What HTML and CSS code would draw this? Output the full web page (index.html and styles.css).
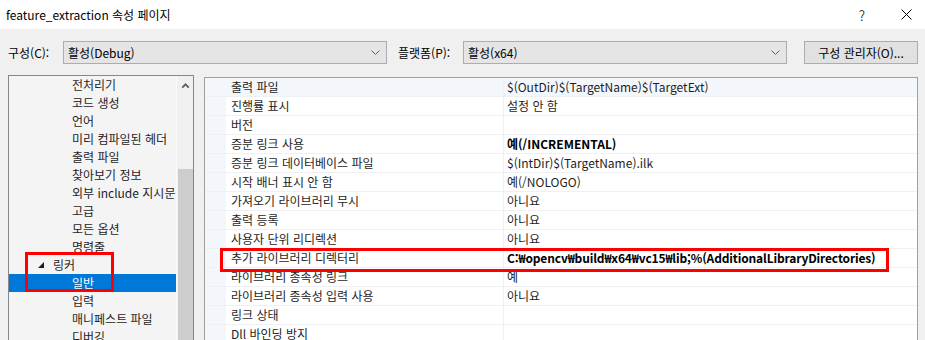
FILE: index.html
```html
<!DOCTYPE html>
<html lang="ko">
<head>
  <meta charset="UTF-8" />
  <title>feature_extraction 속성 페이지</title>
  <link rel="stylesheet" href="styles.css">
</head>
<body>
  <div class="titlebar">
    <span class="title">feature_extraction 속성 페이지</span>
    <span class="help">?</span>
    <svg class="close" width="11" height="11" viewBox="0 0 11 11">
      <path d="M0.5 0.5 L10.5 10.5 M10.5 0.5 L0.5 10.5" stroke="#000" stroke-width="1" fill="none" />
    </svg>
  </div>

  <div class="toolbar">
    <span class="lbl lbl-config">구성(C):</span>
    <div class="combo">
      <span>활성(Debug)</span>
      <svg class="chev" width="9" height="5" viewBox="0 0 9 5"><path d="M0.5 0.5 L4.5 4.5 L8.5 0.5" stroke="#606060" fill="none" /></svg>
    </div>
    <span class="lbl lbl-platform">플랫폼(P):</span>
    <div class="combo">
      <span>활성(x64)</span>
      <svg class="chev" width="9" height="5" viewBox="0 0 9 5"><path d="M0.5 0.5 L4.5 4.5 L8.5 0.5" stroke="#606060" fill="none" /></svg>
    </div>
    <button class="btn">구성 관리자(O)...</button>
  </div>

  <div class="main">
    <div class="tree">
      <ul class="tree-list">
        <li class="node">전처리기</li>
        <li class="node">코드 생성</li>
        <li class="node">언어</li>
        <li class="node">미리 컴파일된 헤더</li>
        <li class="node">출력 파일</li>
        <li class="node">찾아보기 정보</li>
        <li class="node">외부 include 지시문</li>
        <li class="node">고급</li>
        <li class="node">모든 옵션</li>
        <li class="node">명령줄</li>
        <li class="node group">
          <svg class="expander" width="6" height="6" viewBox="0 0 6 6"><polygon points="6,0 6,6 0,6" fill="#1e1e1e" /></svg>
          링커
        </li>
        <li class="node selected">일반</li>
        <li class="node">입력</li>
        <li class="node">매니페스트 파일</li>
        <li class="node">디버깅</li>
      </ul>
      <div class="scrollbar">
        <svg class="arrow-up" width="9" height="6" viewBox="0 0 9 6"><path d="M1 5 L4.5 1.5 L8 5" stroke="#606060" stroke-width="2" fill="none" /></svg>
        <div class="thumb"></div>
      </div>
    </div>

    <div class="props">
      <div class="row hover"><span class="gutter"></span><span class="name">출력 파일</span><span class="value">$(OutDir)$(TargetName)$(TargetExt)</span></div>
      <div class="row"><span class="gutter"></span><span class="name">진행률 표시</span><span class="value">설정 안 함</span></div>
      <div class="row"><span class="gutter"></span><span class="name">버전</span><span class="value"></span></div>
      <div class="row"><span class="gutter"></span><span class="name">증분 링크 사용</span><span class="value changed">예(/INCREMENTAL)</span></div>
      <div class="row"><span class="gutter"></span><span class="name">증분 링크 데이터베이스 파일</span><span class="value">$(IntDir)$(TargetName).ilk</span></div>
      <div class="row"><span class="gutter"></span><span class="name">시작 배너 표시 안 함</span><span class="value">예(/NOLOGO)</span></div>
      <div class="row"><span class="gutter"></span><span class="name">가져오기 라이브러리 무시</span><span class="value">아니요</span></div>
      <div class="row"><span class="gutter"></span><span class="name">출력 등록</span><span class="value">아니요</span></div>
      <div class="row"><span class="gutter"></span><span class="name">사용자 단위 리디렉션</span><span class="value">아니요</span></div>
      <div class="row"><span class="gutter"></span><span class="name">추가 라이브러리 디렉터리</span><span class="value changed path">C:₩opencv₩build₩x64₩vc15₩lib;%(AdditionalLibraryDirectories)</span></div>
      <div class="row"><span class="gutter"></span><span class="name">라이브러리 종속성 링크</span><span class="value">예</span></div>
      <div class="row"><span class="gutter"></span><span class="name">라이브러리 종속성 입력 사용</span><span class="value">아니요</span></div>
      <div class="row"><span class="gutter"></span><span class="name">링크 상태</span><span class="value"></span></div>
      <div class="row"><span class="gutter"></span><span class="name">Dll 바인딩 방지</span><span class="value"></span></div>
    </div>

    <div class="mark mark-tree"></div>
    <div class="mark mark-row"></div>
  </div>
</body>
</html>
```

FILE: styles.css
```css
* {
  box-sizing: border-box;
}
body {
  margin: 0;
  width: 925px;
  height: 340px;
  overflow: hidden;
  background-color: #f0f0f0;
  color: #1e1e1e;
  font-family: "Noto Sans CJK KR", "Noto Sans", sans-serif;
  font-size: 12px;
}

/* title bar */
.titlebar {
  height: 29px;
  background-color: #fff;
  display: flex;
  align-items: center;
  padding-left: 6px;
  color: #000;
}
.title {
  flex: 1;
}
.help {
  font-size: 14px;
  font-weight: 300;
  margin-right: 36px;
}
.close {
  margin-right: 13px;
}

/* configuration bar */
.toolbar {
  height: 46px;
  display: flex;
  align-items: center;
  padding: 0 0 0 8px;
  color: #000;
}
.lbl-config {
  width: 55px;
}
.lbl-platform {
  width: 65px;
  margin-left: 11px;
}
.combo {
  width: 324px;
  height: 23px;
  border: 1px solid #adadad;
  background-color: #e5e5e5;
  display: flex;
  align-items: center;
  justify-content: space-between;
  padding: 0 6px 0 4px;
}
.btn {
  margin-left: 17px;
  width: 114px;
  height: 23px;
  border: 1px solid #adadad;
  background-color: #e1e1e1;
  font: inherit;
  color: #000;
  padding: 0;
}

/* tree + grid */
.main {
  position: relative;
  display: flex;
  align-items: flex-start;
  padding-left: 8px;
}
.tree {
  width: 186px;
  height: 280px;
  border: 1px solid #828790;
  border-bottom: none;
  display: flex;
  background-color: #f4f4f4;
}
.tree-list {
  list-style: none;
  margin: 0;
  padding: 0;
  width: 167px;
  overflow: hidden;
}
.node {
  height: 18px;
  line-height: 18px;
  padding-left: 63px;
  white-space: nowrap;
  color: #1e1e1e;
}
.node.group {
  padding-left: 29px;
  display: flex;
  align-items: center;
  gap: 9px;
}
.node.selected {
  background-color: #0078d7;
  color: #fff;
}
.scrollbar {
  width: 17px;
  background-color: #f0f0f0;
  border-left: 1px solid #fbfbfb;
  display: flex;
  flex-direction: column;
  align-items: center;
}
.arrow-up {
  margin-top: 7px;
}
.thumb {
  margin-top: 80px;
  width: 15px;
  height: 200px;
  background-color: #cdcdcd;
}

.props {
  margin-left: 10px;
  margin-top: 2px;
  width: 714px;
  height: 270px;
  border: 1px solid #a0a0a0;
  border-bottom: none;
  background-color: #fff;
}
.row {
  display: flex;
  height: 19px;
  line-height: 18px;
  border-bottom: 1px solid #eef0f4;
  color: #1e1e1e;
}
.row.hover {
  background-color: #f3f6fb;
}
.gutter {
  width: 21px;
  background-color: #f3f6fb;
}
.name {
  width: 278px;
  padding-left: 5px;
  border-right: 1px solid #eef0f4;
  white-space: nowrap;
}
.value {
  flex: 1;
  padding-left: 3px;
  white-space: nowrap;
}
.value.changed {
  font-weight: bold;
  color: #000;
}
.value.path {
  letter-spacing: -0.15px;
}

/* red highlight boxes drawn over the screenshot */
.mark {
  position: absolute;
  border: 3px solid #ff0000;
}
.mark-tree {
  left: 25px;
  top: 177px;
  width: 89px;
  height: 40px;
}
.mark-row {
  left: 220px;
  top: 173px;
  width: 669px;
  height: 24px;
}
```
